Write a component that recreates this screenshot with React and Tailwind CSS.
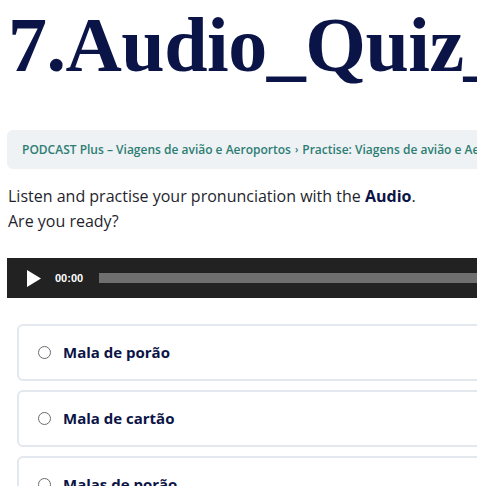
export default function App() {
  const options = ["Mala de porão", "Mala de cartão", "Malas de porão"];
  return (
    <div className="w-[477px] h-[486px] overflow-hidden bg-white">
      <div className="w-[620px] pl-[7px]">
        <h1 className="mt-[6px] pl-[1px] text-[78px] leading-none font-bold text-[#0b1446] whitespace-nowrap tracking-[-0.5px]" style={{ fontFamily: '"Liberation Serif", serif' }}>
          7.Audio_Quiz_Mala
        </h1>
        <div className="mt-[46px] h-[39px] rounded-[6px] bg-[#eef2f5] flex items-center pl-[15px] whitespace-nowrap text-[12px] font-semibold text-[#2d7d73]" style={{ fontFamily: '"Open Sans", sans-serif' }}>
          PODCAST Plus – Viagens de avião e Aeroportos <span className="mx-[4px] text-[10px]">›</span> Practise: Viagens de avião e Aeroportos
        </div>
        <div className="mt-[15px] pl-[1px] text-[16px] leading-[25px] text-[#1f1f2e]" style={{ fontFamily: '"Open Sans", sans-serif' }}>
          <p>Listen and practise your pronunciation with the <b className="text-[#0b1446]">Audio</b>.</p>
          <p>Are you ready?</p>
        </div>
        <div className="mt-[24px] h-[40px] bg-[#222222] flex items-center">
          <svg width="14" height="17" viewBox="0 0 14 17" className="ml-[20px]">
            <path d="M0 0 L14 8.5 L0 17 Z" fill="#ffffff" />
          </svg>
          <span className="ml-[14px] text-[11px] font-bold text-white" style={{ fontFamily: '"Liberation Sans", sans-serif' }}>00:00</span>
          <div className="ml-[16px] flex-1 h-[10px] bg-[#6f6f6f]" />
        </div>
        <div className="mt-[26px] ml-[10px] flex flex-col gap-[9px]">
          {options.map((o) => (
            <div key={o} className="h-[57px] rounded-[6px] border-2 border-[#e3e7ee] flex items-center pl-[19px]">
              <span className="w-[13px] h-[13px] rounded-full border border-[#6b6b6b] bg-white" />
              <span className="ml-[12px] text-[15px] font-bold text-[#0b1446]" style={{ fontFamily: '"Open Sans", sans-serif' }}>{o}</span>
            </div>
          ))}
        </div>
      </div>
    </div>
  );
}
